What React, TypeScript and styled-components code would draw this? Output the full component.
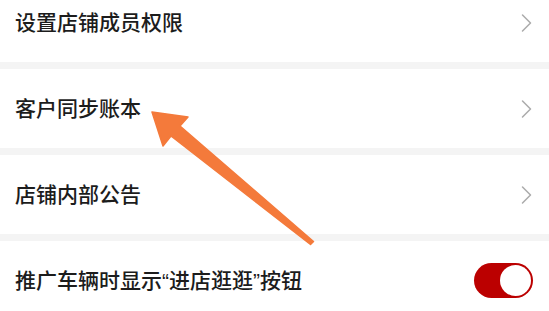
import styled, { createGlobalStyle } from "styled-components";

const GlobalStyle = createGlobalStyle`
  html, body {
    margin: 0;
    padding: 0;
    background: #f4f4f4;
    overflow: hidden;
  }
  body {
    font-family: "Liberation Sans", "Noto Sans CJK SC", sans-serif;
  }
`;

type Item = {
  label: string;
  kind: "link" | "toggle";
};

const items: Item[] = [
  { label: "设置店铺成员权限", kind: "link" },
  { label: "客户同步账本", kind: "link" },
  { label: "店铺内部公告", kind: "link" },
  { label: "推广车辆时显示“进店逛逛”按钮", kind: "toggle" },
];

const Chevron = () => (
  <svg width="12" height="20" viewBox="0 0 12 20" fill="none">
    <path
      d="M2.5 2 L10.5 10 L2.5 18"
      stroke="#aaaaaa"
      strokeWidth="1.5"
      strokeLinecap="round"
      strokeLinejoin="round"
    />
  </svg>
);

const App = () => {
  return (
    <Page>
      <GlobalStyle />
      <List>
        {items.map((item) => (
          <Row key={item.label}>
            <Label>{item.label}</Label>
            {item.kind === "link" ? (
              <Chevron />
            ) : (
              <Toggle>
                <Knob />
              </Toggle>
            )}
          </Row>
        ))}
      </List>
      <Arrow width="549" height="311" viewBox="0 0 549 311">
        <polygon
          points="152,112 188,117 180,126 313.5,241.5 310.5,244.5 171,136 163,146"
          fill="#f47a3b"
          stroke="#f47a3b"
          strokeWidth="1.5"
          strokeLinejoin="round"
        />
      </Arrow>
    </Page>
  );
};

const Page = styled.div`
  position: relative;
  width: 549px;
  height: 311px;
  overflow: hidden;
  background: #f4f4f4;
`;

const List = styled.div`
  display: flex;
  flex-direction: column;
  gap: 7px;
  margin-top: -17px;
`;

const Row = styled.div`
  display: flex;
  align-items: center;
  justify-content: space-between;
  height: 79px;
  padding: 0 17px 0 15px;
  background: #ffffff;
  box-sizing: border-box;
`;

const Label = styled.span`
  font-size: 21px;
  font-weight: 500;
  color: #1c1c1c;
  line-height: 1;
`;

const Toggle = styled.div`
  display: flex;
  align-items: center;
  justify-content: flex-end;
  width: 59px;
  height: 35px;
  margin-right: -1px;
  padding: 2px;
  box-sizing: border-box;
  border-radius: 18px;
  background: #bb0000;
`;

const Knob = styled.div`
  width: 31px;
  height: 31px;
  border-radius: 50%;
  background: #ffffff;
`;

const Arrow = styled.svg`
  position: absolute;
  left: 0;
  top: 0;
  pointer-events: none;
`;

export default App;
